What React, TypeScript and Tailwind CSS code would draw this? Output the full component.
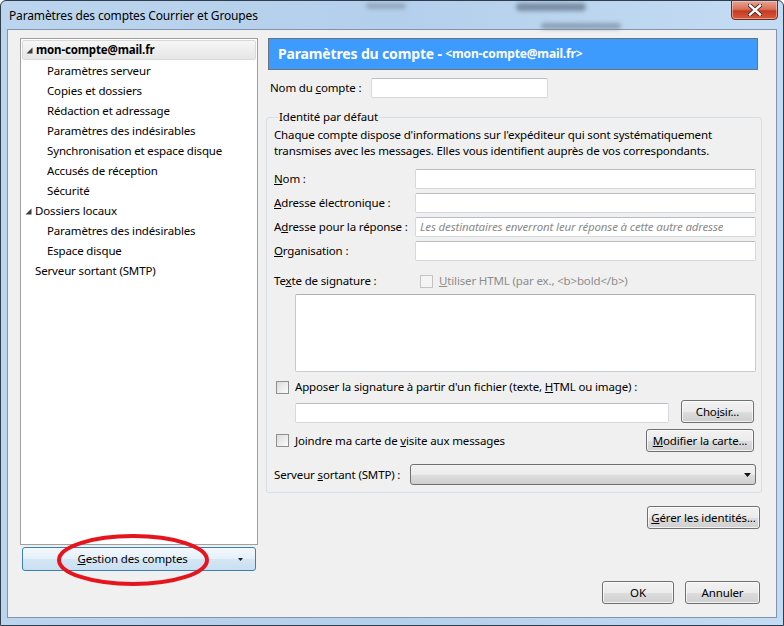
import React from 'react'

const BTN =
  'h-[23px] flex items-center justify-center rounded-[3px] border border-[#707070] bg-[linear-gradient(#f2f2f2_0%,#ebebeb_50%,#dddddd_51%,#cfcfcf_100%)] shadow-[inset_0_0_0_1px_rgba(255,255,255,0.7)] text-black'

function Btn({ w, children }: { w: string; children: React.ReactNode }) {
  return (
    <div className={`${BTN} ${w}`}>
      <span className="whitespace-nowrap">{children}</span>
    </div>
  )
}

function Input({ className = '', children }: { className?: string; children?: React.ReactNode }) {
  return (
    <div className={`h-[20px] bg-white border border-[#d5d9de] border-t-[#b8bdc4] rounded-[2px] flex items-center px-[4px] ${className}`}>
      {children}
    </div>
  )
}

function Check({ disabled }: { disabled?: boolean }) {
  return (
    <div
      className={`w-[13px] h-[13px] shrink-0 border ${
        disabled ? 'border-[#c4c4c4] bg-[#f4f4f4]' : 'border-[#8e8f8f] bg-[linear-gradient(135deg,#dcdcdc,#fbfbfb)]'
      }`}
    />
  )
}

function Expander() {
  return (
    <svg width="7" height="7" viewBox="0 0 7 7" className="shrink-0">
      <path d="M6.5 0.5 L6.5 6.5 L0.5 6.5 Z" fill="#3c3c3c" />
    </svg>
  )
}

const tree: { label: string; level: number; exp?: boolean; sel?: boolean }[] = [
  { label: 'mon-compte@mail.fr', level: 0, exp: true, sel: true },
  { label: 'Paramètres serveur', level: 1 },
  { label: 'Copies et dossiers', level: 1 },
  { label: 'Rédaction et adressage', level: 1 },
  { label: 'Paramètres des indésirables', level: 1 },
  { label: 'Synchronisation et espace disque', level: 1 },
  { label: 'Accusés de réception', level: 1 },
  { label: 'Sécurité', level: 1 },
  { label: 'Dossiers locaux', level: 0, exp: true },
  { label: 'Paramètres des indésirables', level: 1 },
  { label: 'Espace disque', level: 1 },
  { label: 'Serveur sortant (SMTP)', level: 0 },
]

export default function App() {
  return (
    <div className="relative w-[784px] h-[626px] overflow-hidden rounded-t-[6px] border border-[#2f3d4d] bg-[linear-gradient(90deg,#bcd5ee,#b4cfec_50%,#c4dcf3)] flex flex-col font-['Noto_Sans',sans-serif] text-[11.5px] tracking-[-0.15px] leading-[16px] text-black">
      {/* title bar, with the blurred desktop behind the glass */}
      <div className="relative h-[28px] shrink-0 flex items-center pl-[8px]">
        <div className="absolute left-[365px] top-[2px] w-[40px] h-[6px] rounded-full bg-[#7d8ea2] blur-[2px] opacity-60" />
        <div className="absolute left-[515px] top-[2px] w-[70px] h-[8px] rounded-full bg-[#5f7084] blur-[2px] opacity-70" />
        <div className="absolute left-[540px] top-[22px] w-[80px] h-[6px] rounded-full bg-[#6a7b8e] blur-[2px] opacity-60" />
        <span className="relative pt-[2px] text-[12px]">Paramètres des comptes Courrier et Groupes</span>
        <div className="absolute right-[5px] top-[-1px] w-[47px] h-[20px] rounded-b-[4px] border border-[#6b2c22] bg-[linear-gradient(#e8a493_0%,#d9715c_45%,#c63b22_55%,#d45a3c_100%)] flex items-center justify-center shadow-[inset_0_0_0_1px_rgba(255,220,210,0.5)]">
          <svg width="14" height="12" viewBox="0 0 14 12">
            <path d="M2 1.5 L12 10.5 M12 1.5 L2 10.5" stroke="#4a2320" strokeWidth="4.2" strokeLinecap="square" />
            <path d="M2 1.5 L12 10.5 M12 1.5 L2 10.5" stroke="#ffffff" strokeWidth="2.4" strokeLinecap="square" />
          </svg>
        </div>
      </div>

      {/* client area */}
      <div className="flex-1 mx-[6px] mb-[7px] border border-[#8194a9] bg-[#f0f0f0] flex gap-[8px] pl-[12px] pr-[14px] pt-[8px]">
        {/* left column */}
        <div className="w-[238px] shrink-0 flex flex-col gap-[2px] self-start">
          <div className="h-[507px] bg-white border border-[#a0a0a0] pt-[1px] px-[1px]">
            {tree.map((t, i) => (
              <div
                key={i}
                className={`h-[20px] flex items-center ${
                  t.sel ? 'h-[19px] mb-[1px] rounded-[2px] border border-[#d9d9d9] bg-[linear-gradient(#f6f6f6,#e6e6e6)] font-bold' : ''
                } ${t.level === 0 ? 'pl-[3px]' : 'pl-[25px]'}`}
              >
                {t.level === 0 && (
                  <span className="w-[10px] flex justify-start">{t.exp && <Expander />}</span>
                )}
                <span className="whitespace-nowrap">{t.label}</span>
              </div>
            ))}
          </div>
          <div className="mx-[2px] h-[24px] rounded-[3px] border border-[#3c7fb1] bg-[linear-gradient(#f3f8fc_0%,#e5f0f9_50%,#d4e6f5_51%,#c9dfef_100%)] flex items-center">
            <span className="flex-1 text-center pl-[4px] whitespace-nowrap">
              <u>G</u>estion des comptes
            </span>
            <svg width="5" height="3" viewBox="0 0 5 3" className="mr-[12px]">
              <path d="M0 0 L5 0 L2.5 3 Z" fill="#222" />
            </svg>
          </div>
        </div>

        {/* right column */}
        <div className="flex-1 flex flex-col pb-[13px]">
          <div className="ml-[2px] mr-[4px] h-[32px] bg-[#3d9bfd] border border-[#6f7378] flex items-center pl-[9px] text-white font-bold">
            <span className="text-[14px]">Paramètres du compte -&nbsp;</span>
            <span className="text-[12px]">&lt;mon-compte@mail.fr&gt;</span>
          </div>

          <div className="mt-[8px] h-[20px] flex items-center pl-[4px]">
            <span className="w-[101px] whitespace-nowrap">
              Nom du <u>c</u>ompte :
            </span>
            <Input className="w-[177px]" />
          </div>

          <fieldset className="mt-[11px] border border-[#d5dfe5] rounded-[3px] pl-[7px] pr-[5px] pb-[7px] min-w-0">
            <legend className="ml-[4px] px-[1px]">Identité par défaut</legend>
            <p className="mt-[2px] leading-[16px] whitespace-nowrap">
              Chaque compte dispose d'informations sur l'expéditeur qui sont systématiquement
              <br />
              transmises avec les messages. Elles vous identifient auprès de vos correspondants.
            </p>

            <div className="mt-[10px] flex flex-col gap-[4px]">
              {[
                [<><u>N</u>om :</>, null],
                [<><u>A</u>dresse électronique :</>, null],
                [<>A<u>d</u>resse pour la réponse :</>, 'Les destinataires enverront leur réponse à cette autre adresse'],
                [<><u>O</u>rganisation :</>, null],
              ].map(([label, ph], i) => (
                <div key={i} className="h-[20px] flex items-center">
                  <span className="w-[141px] shrink-0 whitespace-nowrap">{label}</span>
                  <Input className="flex-1">
                    {ph && <span className="italic text-[#8a8a8a] whitespace-nowrap overflow-hidden">{ph}</span>}
                  </Input>
                </div>
              ))}
            </div>

            <div className="mt-[10px] h-[20px] flex items-center">
              <span className="w-[146px] shrink-0 whitespace-nowrap">
                Te<u>x</u>te de signature :
              </span>
              <Check disabled />
              <span className="ml-[6px] text-[#8d8d8d] whitespace-nowrap">
                <u>U</u>tiliser HTML (par ex., &lt;b&gt;bold&lt;/b&gt;)
              </span>
            </div>

            <div className="mt-[3px] ml-[21px] h-[78px] bg-white border border-[#c6cbd2] border-t-[#abb0b7] rounded-[2px]" />

            <div className="mt-[5px] h-[20px] flex items-center pl-[2px]">
              <Check />
              <span className="ml-[6px] whitespace-nowrap">
                Apposer la signature à partir d'un fichier (texte, <u>H</u>TML ou image) :
              </span>
            </div>

            <div className="mt-[3px] ml-[21px] flex items-end">
              <Input className="w-[374px]" />
              <div className="flex-1" />
              <Btn w="w-[73px] mr-[2px]">
                Cho<u>i</u>sir...
              </Btn>
            </div>

            <div className="mt-[6px] h-[23px] flex items-center pl-[2px]">
              <Check />
              <span className="ml-[6px] whitespace-nowrap">
                Joindre ma carte de <u>v</u>isite aux messages
              </span>
              <div className="flex-1" />
              <Btn w="w-[108px] mr-[2px]">
                <u>M</u>odifier la carte...
              </Btn>
            </div>

            <div className="mt-[12px] h-[21px] flex items-center">
              <span className="w-[136px] shrink-0 whitespace-nowrap">
                Serveur <u>s</u>ortant (SMTP) :
              </span>
              <div className="flex-1 h-[21px] rounded-[3px] border border-[#707070] bg-[linear-gradient(#f2f2f2_0%,#ebebeb_50%,#dddddd_51%,#cfcfcf_100%)] flex items-center justify-end pr-[4px]">
                <svg width="7" height="4" viewBox="0 0 7 4">
                  <path d="M0 0 L7 0 L3.5 4 Z" fill="#111" />
                </svg>
              </div>
            </div>
          </fieldset>

          <div className="mt-[13px] flex justify-end pr-[2px]">
            <Btn w="w-[113px]">
              <u>G</u>érer les identités...
            </Btn>
          </div>

          <div className="mt-auto flex justify-end gap-[11px] pr-[2px]">
            <Btn w="w-[72px]">OK</Btn>
            <Btn w="w-[75px]">Annuler</Btn>
          </div>
        </div>
      </div>

      {/* red annotation */}
      <svg className="absolute left-[54px] top-[531px] pointer-events-none" width="156" height="56" viewBox="0 0 156 56">
        <ellipse cx="78" cy="28" rx="74" ry="24" fill="none" stroke="#e6141c" strokeWidth="4" />
      </svg>
    </div>
  )
}
